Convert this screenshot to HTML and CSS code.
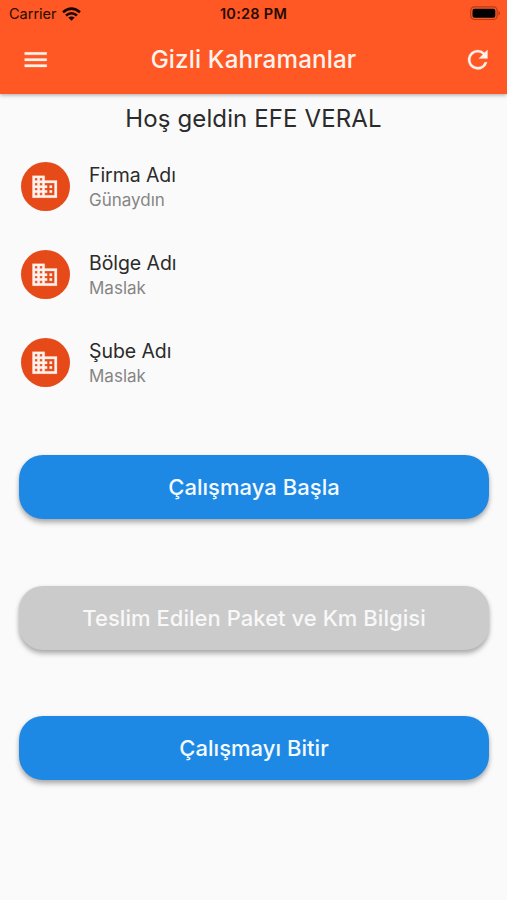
FILE: index.html
```html
<!DOCTYPE html>
<html lang="tr">
<head>
<meta charset="utf-8">
<title>Gizli Kahramanlar</title>
<link rel="stylesheet" href="styles.css">
</head>
<body>
<header class="top">
  <div class="status">
    <div class="carrier"><span>Carrier</span>
      <svg width="19" height="14" viewBox="0 0 19 14" fill="none" stroke="#1a0500" stroke-width="2.6"><path d="M1 5.2Q9.5-2 18 5.2M4 8.5Q9.500 4 15 8.500"/><path d="M9.500 13.700L6.300 10.500Q9.500 8.300 12.700 10.500Z" fill="#1a0500" stroke="none"/></svg>
    </div>
    <span class="time">10:28 PM</span>
    <svg class="battery" width="31" height="15" viewBox="0 0 31 15"><rect x=".7" y=".8" width="26.500" height="12.700" rx="3.800" fill="none" stroke="#b53c18" stroke-width="1.200"/><rect x="2.500" y="2.700" width="22.800" height="9" rx="2" fill="#000"/><path d="M28.500 5v4.400q1.600-.6 1.600-2.200T28.500 5" fill="#b53c18"/></svg>
  </div>
  <div class="bar">
    <svg class="icon" viewBox="0 0 24 24"><path d="M3 18h18v-2H3v2zm0-5h18v-2H3v2zm0-7v2h18V6H3z"/></svg>
    <h1>Gizli Kahramanlar</h1>
    <svg class="icon" viewBox="0 0 24 24"><path d="M17.650 6.350A7.958 7.958 0 0 0 12 4a8 8 0 1 0 7.730 10h-2.080A5.990 5.990 0 0 1 12 18a6 6 0 1 1 0-12c1.660 0 3.140.69 4.220 1.780L13 11h7V4l-2.350 2.350z"/></svg>
  </div>
</header>
<main>
  <h2>Hoş geldin EFE VERAL</h2>
  <ul class="list">
    <li><span class="avatar"><svg class="icon" viewBox="0 0 24 24"><path d="M12 7V3H2v18h20V7H12zM6 19H4v-2h2v2zm0-4H4v-2h2v2zm0-4H4V9h2v2zm0-4H4V5h2v2zm4 12H8v-2h2v2zm0-4H8v-2h2v2zm0-4H8V9h2v2zm0-4H8V5h2v2zm10 12h-8v-2h2v-2h-2v-2h2v-2h-2V9h8v10zm-2-8h-2v2h2v-2zm0 4h-2v2h2v-2z"/></svg></span><div><p class="name">Firma Adı</p><p class="value">Günaydın</p></div></li>
    <li><span class="avatar"><svg class="icon" viewBox="0 0 24 24"><path d="M12 7V3H2v18h20V7H12zM6 19H4v-2h2v2zm0-4H4v-2h2v2zm0-4H4V9h2v2zm0-4H4V5h2v2zm4 12H8v-2h2v2zm0-4H8v-2h2v2zm0-4H8V9h2v2zm0-4H8V5h2v2zm10 12h-8v-2h2v-2h-2v-2h2v-2h-2V9h8v10zm-2-8h-2v2h2v-2zm0 4h-2v2h2v-2z"/></svg></span><div><p class="name">Bölge Adı</p><p class="value">Maslak</p></div></li>
    <li><span class="avatar"><svg class="icon" viewBox="0 0 24 24"><path d="M12 7V3H2v18h20V7H12zM6 19H4v-2h2v2zm0-4H4v-2h2v2zm0-4H4V9h2v2zm0-4H4V5h2v2zm4 12H8v-2h2v2zm0-4H8v-2h2v2zm0-4H8V9h2v2zm0-4H8V5h2v2zm10 12h-8v-2h2v-2h-2v-2h2v-2h-2V9h8v10zm-2-8h-2v2h2v-2zm0 4h-2v2h2v-2z"/></svg></span><div><p class="name">Şube Adı</p><p class="value">Maslak</p></div></li>
  </ul>
  <div class="actions">
    <button>Çalışmaya Başla</button>
    <button class="off">Teslim Edilen Paket ve Km Bilgisi</button>
    <button>Çalışmayı Bitir</button>
  </div>
</main>
</body>
</html>
```
FILE: styles.css
```css
* { box-sizing: border-box; }
body { margin: 0; min-height: 900px; background: #fafafa; color: #2b2b2b; font-family: Inter, "Liberation Sans", sans-serif; }
h1, h2, p, ul { margin: 0; padding: 0; font-weight: 400; white-space: nowrap; }
.top { height: 94px; background: #ff5824; box-shadow: 0 1px 4px rgba(0, 0, 0, .35); }
.status { height: 26px; display: grid; grid-template-columns: 1fr auto 1fr; align-items: center; padding: 1px 6px 0 9px; color: #260b03; font-size: 14.5px; }
.carrier { display: flex; align-items: center; gap: 5px; }
.time { font-weight: 600; font-size: 14.5px; letter-spacing: .25px; margin-left: -3px; }
.battery { justify-self: end; }
.bar { height: 67px; display: flex; align-items: center; justify-content: space-between; padding: 0 14.500px 0 20.500px; color: #fff3ee; }
.icon { display: block; width: 29.400px; height: 29.400px; fill: #fff3ee; stroke: #fff3ee; stroke-width: .2; }
.bar .icon { margin-top: 1px; }
h1 { font-size: 24.200px; font-weight: 500; letter-spacing: .15px; margin-left: -6px; }
h2 { padding-top: 9px; text-align: center; font-size: 24px; line-height: 32px; letter-spacing: .12px; }
.list { list-style: none; padding-top: 8px; }
.list li { height: 88px; display: flex; align-items: center; gap: 19.500px; padding-left: 20.500px; }
.avatar { width: 49px; height: 49px; margin-top: -1px; border-radius: 50%; background: #e64a19; display: grid; place-items: center; }
.name { font-size: 19.500px; line-height: 26px; letter-spacing: -.08px; }
.value { font-size: 17px; line-height: 24px; color: #858585; }
.actions { display: grid; gap: 66.500px; padding: 48px 18px 0 19px; }
button { height: 64px; border: 0; border-radius: 24px; background: #1e88e5; color: #f3faff; font: 500 22px Inter, "Liberation Sans", sans-serif; letter-spacing: .04px; box-shadow: 0 4px 5px rgba(0, 0, 0, .25), 0 1px 4px rgba(0, 0, 0, .12); }
.off { background: #cbcbcb; color: #f8f8f8; }
```
